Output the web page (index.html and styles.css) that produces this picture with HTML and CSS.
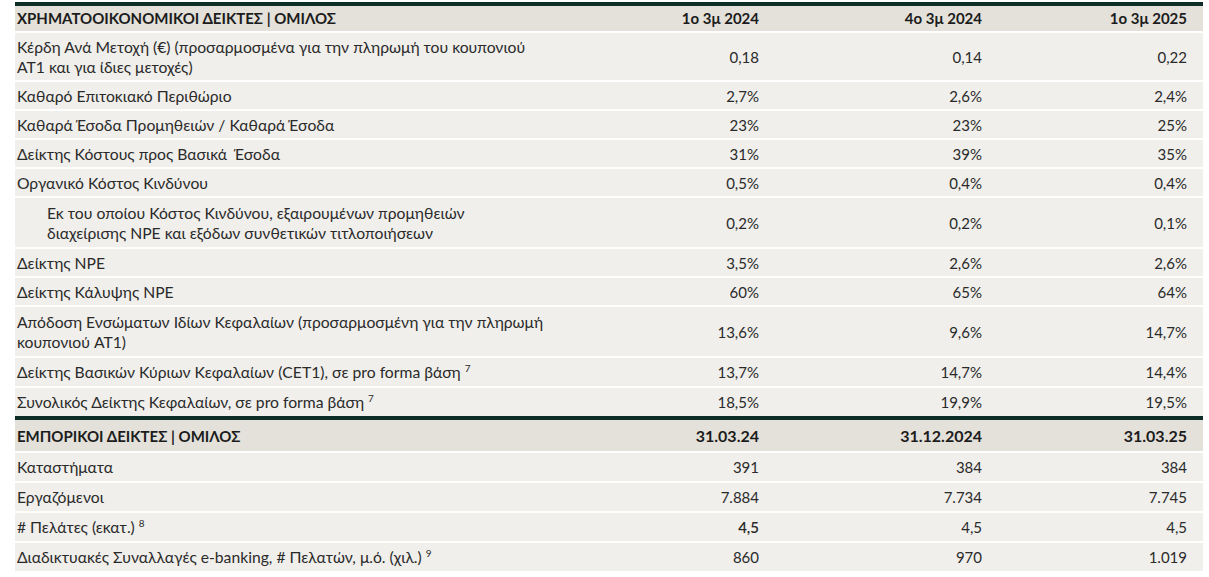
FILE: index.html
```html
<!DOCTYPE html>
<html lang="el">
<head>
<meta charset="utf-8">
<link rel="stylesheet" href="styles.css">
</head>
<body>
<div class="wrap">
<table class="kpi">
<colgroup><col class="c-label"><col class="c-v1"><col class="c-v2"><col class="c-v3"></colgroup>
<tr class="head first">
<th>ΧΡΗΜΑΤΟΟΙΚΟΝΟΜΙΚΟΙ ΔΕΙΚΤΕΣ | ΟΜΙΛΟΣ</th><th class="num">1ο 3μ 2024</th><th class="num">4ο 3μ 2024</th><th class="num">1ο 3μ 2025</th>
</tr>
<tr class="first-two"><td class="lbl">Κέρδη Ανά Μετοχή (€) (προσαρμοσμένα για την πληρωμή του κουπονιού<br>AT1 και για ίδιες μετοχές)</td><td class="num">0,18</td><td class="num">0,14</td><td class="num">0,22</td></tr>
<tr><td class="lbl">Καθαρό Επιτοκιακό Περιθώριο</td><td class="num">2,7%</td><td class="num">2,6%</td><td class="num">2,4%</td></tr>
<tr><td class="lbl">Καθαρά Έσοδα Προμηθειών / Καθαρά Έσοδα</td><td class="num">23%</td><td class="num">23%</td><td class="num">25%</td></tr>
<tr><td class="lbl">Δείκτης Κόστους προς Βασικά &nbsp;Έσοδα</td><td class="num">31%</td><td class="num">39%</td><td class="num">35%</td></tr>
<tr><td class="lbl">Οργανικό Κόστος Κινδύνου</td><td class="num">0,5%</td><td class="num">0,4%</td><td class="num">0,4%</td></tr>
<tr class="two"><td class="lbl indent">Εκ του οποίου Κόστος Κινδύνου, εξαιρουμένων προμηθειών<br>διαχείρισης NPE και εξόδων συνθετικών τιτλοποιήσεων</td><td class="num">0,2%</td><td class="num">0,2%</td><td class="num">0,1%</td></tr>
<tr><td class="lbl">Δείκτης NPE</td><td class="num">3,5%</td><td class="num">2,6%</td><td class="num">2,6%</td></tr>
<tr><td class="lbl">Δείκτης Κάλυψης NPE</td><td class="num">60%</td><td class="num">65%</td><td class="num">64%</td></tr>
<tr class="two"><td class="lbl">Απόδοση Ενσώματων Ιδίων Κεφαλαίων (προσαρμοσμένη για την πληρωμή<br>κουπονιού AT1)</td><td class="num">13,6%</td><td class="num">9,6%</td><td class="num">14,7%</td></tr>
<tr class="tall"><td class="lbl">Δείκτης Βασικών Κύριων Κεφαλαίων (CET1), σε pro forma βάση <sup>7</sup></td><td class="num">13,7%</td><td class="num">14,7%</td><td class="num">14,4%</td></tr>
<tr class="tall"><td class="lbl">Συνολικός Δείκτης Κεφαλαίων, σε pro forma βάση <sup>7</sup></td><td class="num">18,5%</td><td class="num">19,9%</td><td class="num">19,5%</td></tr>
<tr class="head second">
<th>ΕΜΠΟΡΙΚΟΙ ΔΕΙΚΤΕΣ | ΟΜΙΛΟΣ</th><th class="num big">31.03.24</th><th class="num big">31.12.2024</th><th class="num big">31.03.25</th>
</tr>
<tr class="tall"><td class="lbl">Καταστήματα</td><td class="num">391</td><td class="num">384</td><td class="num">384</td></tr>
<tr class="tall"><td class="lbl">Εργαζόμενοι</td><td class="num">7.884</td><td class="num">7.734</td><td class="num">7.745</td></tr>
<tr class="tall"><td class="lbl"># Πελάτες (εκατ.) <sup>8</sup></td><td class="num strong">4,5</td><td class="num">4,5</td><td class="num">4,5</td></tr>
<tr class="tall"><td class="lbl">Διαδικτυακές Συναλλαγές e-banking, # Πελατών, μ.ό. (χιλ.) <sup>9</sup></td><td class="num">860</td><td class="num">970</td><td class="num">1.019</td></tr>
</table>
</div>
</body>
</html>
```
FILE: styles.css
```css
html, body {
  margin: 0;
  padding: 0;
  background: #ffffff;
}
.wrap {
  padding: 2px 6px 0 15px;
}
.kpi {
  width: 1188px;
  border-collapse: collapse;
  font-family: Lato, "Noto Sans", sans-serif;
  font-size: 15px;
  color: #2a2a2a;
  table-layout: fixed;
}
.c-v1 { width: 223px; }
.c-v2 { width: 223px; }
.c-v3 { width: 205px; }
.kpi td, .kpi th {
  background: #f0efeb;
  border-top: 2px solid #ffffff;
  padding: 4px 16px 3px 2px;
  line-height: 20px;
  text-align: left;
  vertical-align: middle;
  font-weight: 400;
}
.kpi tr.two td {
  padding-top: 5px;
  padding-bottom: 4px;
}
.kpi tr.first-two td {
  padding-top: 4px;
  padding-bottom: 3px;
}
.kpi tr.tall td {
  padding-top: 4px;
  padding-bottom: 4px;
}
.kpi td.lbl {
  font-size: 15.7px;
  white-space: nowrap;
}
.kpi tr.head th {
  background: #e3e1d9;
  border-top: 4px solid #0d2d27;
  font-weight: 700;
  color: #1c1c1c;
  padding-top: 2px;
  padding-bottom: 3px;
}
.kpi tr.second th {
  padding-top: 6px;
  padding-bottom: 5px;
}
.kpi tr.head th.big {
  font-size: 16px;
}
.kpi .num {
  text-align: right;
}
.kpi td.indent {
  padding-left: 32px;
}
.kpi td.strong {
  font-weight: 600;
}
.kpi sup {
  font-size: 10px;
  line-height: 0;
  vertical-align: 6px;
}
```
